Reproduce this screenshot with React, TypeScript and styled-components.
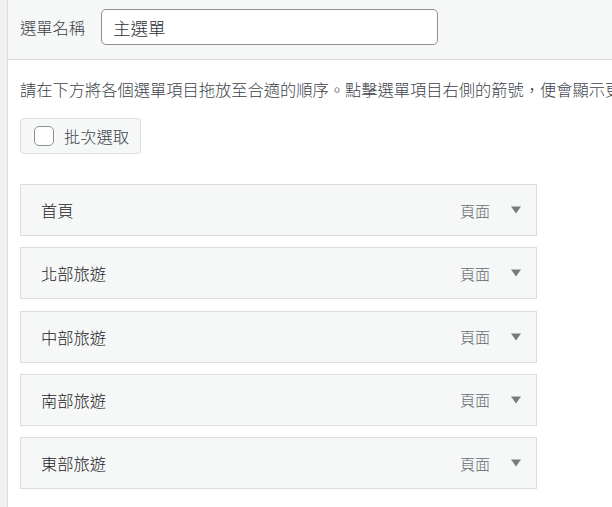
import React from "react";
import styled, { createGlobalStyle } from "styled-components";

const Global = createGlobalStyle`
  html, body { margin: 0; padding: 0; background: #f0f0f1; }
  body {
    font-family: "Noto Sans CJK TC", "Noto Sans", sans-serif;
    color: #3c434a;
    overflow: hidden;
  }
  * { box-sizing: border-box; }
`;

const Page = styled.div`
  display: flex;
  min-height: 507px;
  width: 612px;
`;

const Gutter = styled.div`
  width: 7px;
  flex: none;
  background: #f0f0f1;
`;

const Panel = styled.div`
  flex: 1;
  min-width: 0;
  background: #ffffff;
  border-left: 1px solid #dcdcde;
  overflow: hidden;
`;

const Header = styled.div`
  display: flex;
  align-items: center;
  height: 60px;
  padding: 0 12px 5px;
  background: #f6f7f7;
  border-bottom: 1px solid #dcdcde;
`;

const Label = styled.label`
  font-size: 16.25px;
  font-weight: 300;
  color: #3c434a;
  margin-right: 16px;
  white-space: nowrap;
`;

const NameInput = styled.input`
  width: 337px;
  height: 36px;
  border: 1px solid #8c8f94;
  border-radius: 5px;
  padding: 0 11px;
  font-family: inherit;
  font-size: 17.5px;
  font-weight: 300;
  color: #2c3338;
  background: #fff;
  outline: none;
`;

const Body = styled.div`
  padding: 17px 12px 0;
`;

const Description = styled.p`
  margin: 0;
  font-size: 16.25px;
  font-weight: 300;
  line-height: 24px;
  color: #3c434a;
  white-space: nowrap;
`;

const BulkButton = styled.label`
  display: inline-flex;
  align-items: center;
  gap: 10px;
  margin-top: 17px;
  height: 36px;
  padding: 0 11px 0 13px;
  background: #f6f7f7;
  border: 1px solid #dcdcde;
  border-radius: 4px;
  font-size: 16.25px;
  font-weight: 300;
  color: #3c434a;
  white-space: nowrap;
`;

const CheckBox = styled.span`
  width: 20px;
  height: 20px;
  flex: none;
  border: 1px solid #8c8f94;
  border-radius: 5px;
  background: #fff;
`;

const List = styled.ul`
  list-style: none;
  margin: 30px 0 0;
  padding: 0;
  display: flex;
  flex-direction: column;
  gap: 11.25px;
`;

const Item = styled.li`
  display: flex;
  align-items: center;
  width: 517px;
  height: 52px;
  padding: 0 15px 0 20px;
  background: #f6f7f7;
  border: 1px solid #dcdcde;
`;

const Title = styled.span`
  flex: 1;
  font-size: 16.25px;
  font-weight: 300;
  color: #1d2327;
`;

const ItemType = styled.span`
  font-size: 15px;
  font-weight: 300;
  color: #646970;
  margin-right: 21px;
`;

const Arrow = () => (
  <svg width="10" height="8" viewBox="0 0 10 8" aria-hidden="true">
    <path d="M0 0.5 H10 L5 7.5 Z" fill="#787c82" />
  </svg>
);

const items = ["首頁", "北部旅遊", "中部旅遊", "南部旅遊", "東部旅遊"];

export default function App() {
  return (
    <>
      <Global />
      <Page>
        <Gutter />
        <Panel>
          <Header>
            <Label>選單名稱</Label>
            <NameInput defaultValue="主選單" />
          </Header>
          <Body>
            <Description>
              請在下方將各個選單項目拖放至合適的順序。點擊選單項目右側的箭號，便會顯示更多設定選項。
            </Description>
            <BulkButton>
              <CheckBox />
              批次選取
            </BulkButton>
            <List>
              {items.map((t) => (
                <Item key={t}>
                  <Title>{t}</Title>
                  <ItemType>頁面</ItemType>
                  <Arrow />
                </Item>
              ))}
            </List>
          </Body>
        </Panel>
      </Page>
    </>
  );
}
